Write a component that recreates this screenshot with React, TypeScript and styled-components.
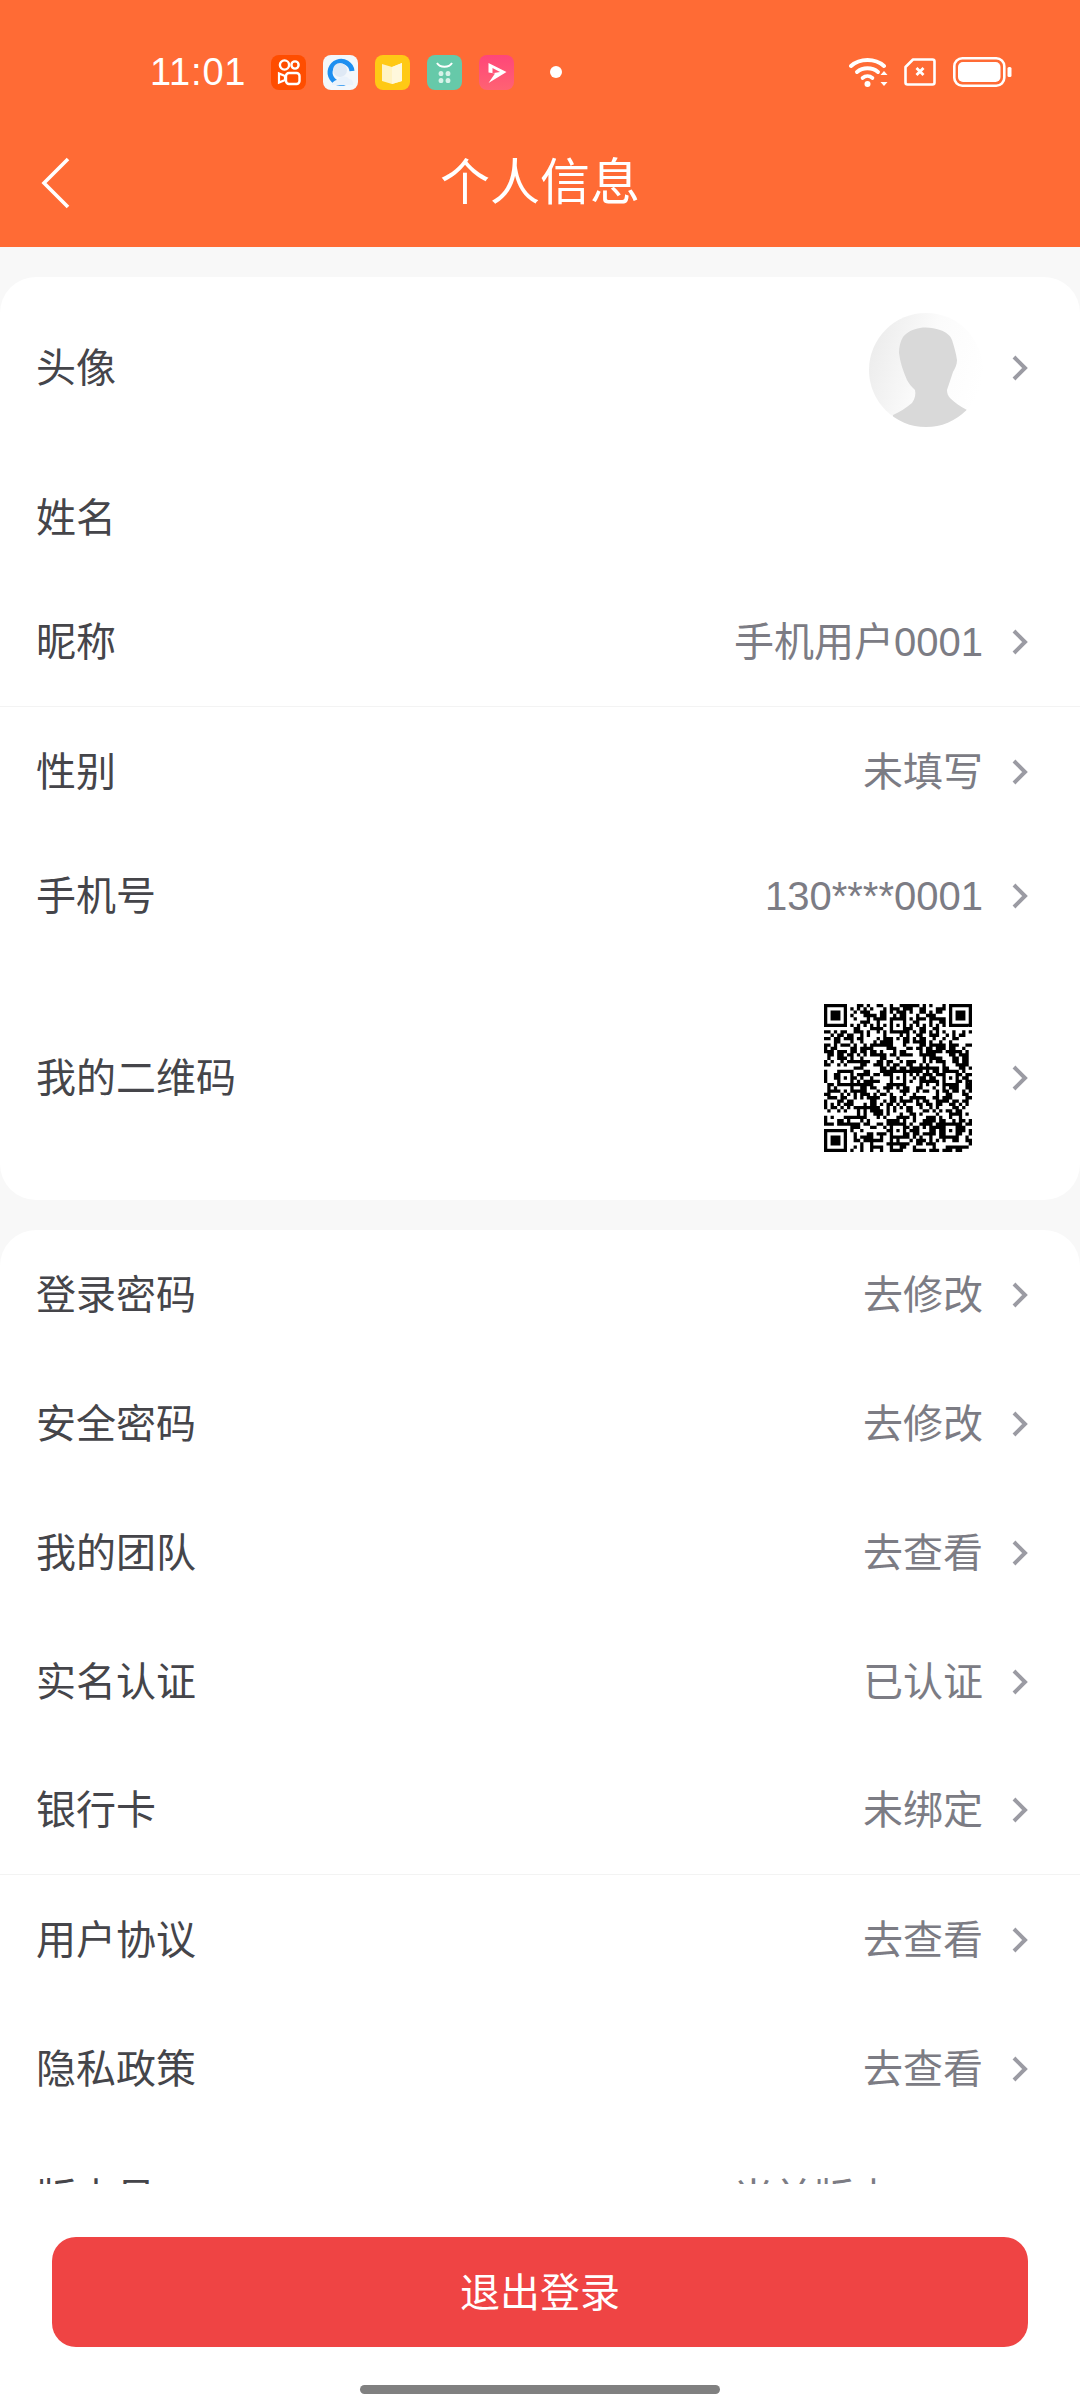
import React from "react";
import styled, { createGlobalStyle } from "styled-components";

const GlobalStyle = createGlobalStyle`
  html, body {
    margin: 0;
    padding: 0;
    background: #fff;
  }
  * {
    box-sizing: border-box;
  }
`;

const Page = styled.div`
  width: 1080px;
  height: 2400px;
  display: flex;
  flex-direction: column;
  overflow: hidden;
  font-family: "Liberation Sans", "Noto Sans CJK SC", sans-serif;
  background: #fff;
`;

const Header = styled.header`
  flex: none;
  height: 247px;
  background: #ff6b35;
  color: #fff;
  display: flex;
  flex-direction: column;
`;

const StatusBar = styled.div`
  height: 147px;
  display: flex;
  align-items: center;
  padding: 0 68px 3px 150px;
`;

const Clock = styled.span`
  font-size: 38px;
  line-height: 1;
  letter-spacing: 0.8px;
  width: 121px;
`;

const AppIcons = styled.div`
  display: flex;
  align-items: center;
  gap: 17px;
`;

const AppIcon = styled.svg`
  display: block;
  width: 35px;
  height: 35px;
`;

const Dot = styled.span`
  width: 12px;
  height: 12px;
  border-radius: 50%;
  background: #fff;
  margin-left: 19px;
`;

const SystemIcons = styled.div`
  margin-left: auto;
  display: flex;
  align-items: center;
  gap: 17px;
`;

const WifiIcon = styled.svg`
  display: block;
  margin-right: -3px;
`;

const NavBar = styled.div`
  height: 72px;
  display: grid;
  grid-template-columns: 1fr auto 1fr;
  align-items: center;
  padding: 0 40px;
`;

const Title = styled.h1`
  margin: 0;
  font-size: 50px;
  font-weight: 400;
  line-height: 72px;
`;

const Scroller = styled.main`
  flex: 1;
  min-height: 0;
  overflow: hidden;
  background: #f8f8f8;
  padding-top: 30px;
  display: flex;
  flex-direction: column;
  gap: 30px;
`;

const Card = styled.section`
  flex: none;
  background: #fff;
  border-radius: 36px;
`;

const Row = styled.div<{ $height: number; $divider?: boolean }>`
  height: ${(p) => p.$height}px;
  display: flex;
  align-items: center;
  padding: 0 52px 0 36px;
  border-bottom: ${(p) => (p.$divider ? "1px solid #f3f3f3" : "none")};
`;

const Label = styled.span`
  font-size: 40px;
  line-height: 1;
  color: #45454a;
`;

const Value = styled.span<{ $bare?: boolean }>`
  margin-left: auto;
  margin-right: ${(p) => (p.$bare ? "-19px" : "0")};
  font-size: 40px;
  line-height: 1;
  color: #7c7c84;
`;

const Trailing = styled.div`
  margin-left: auto;
  display: flex;
  align-items: center;
`;

const Chevron = styled.svg`
  flex: none;
  display: block;
  width: 16px;
  height: 26px;
  margin-left: 29px;
`;

const Avatar = styled.svg`
  display: block;
  width: 114px;
  height: 114px;
  margin-top: 4px;
`;

const QrCode = styled.svg`
  display: block;
  width: 148px;
  height: 148px;
  margin-right: 11px;
`;

const Footer = styled.footer`
  flex: none;
  height: 216px;
  background: #fff;
  padding: 53px 52px 0;
  display: flex;
  flex-direction: column;
  align-items: center;
`;

const LogoutButton = styled.button`
  width: 100%;
  height: 110px;
  border: none;
  border-radius: 24px;
  background: #ef4444;
  color: #fff;
  font-family: inherit;
  font-size: 40px;
  padding: 0 0 4px;
`;

const HomeBar = styled.div`
  width: 360px;
  height: 9px;
  border-radius: 5px;
  background: #808080;
  margin-top: 38px;
`;

const Arrow = () => (
  <Chevron viewBox="0 0 16 26">
    <path d="M2 2l11 11L2 24" fill="none" stroke="#9b9ba3" strokeWidth="4" />
  </Chevron>
);

// 45 modules (version 7): fixed patterns are real, the data part is only a stand-in
const QR_SIZE = 45;

const buildQr = () => {
  const cells: boolean[][] = Array.from({ length: QR_SIZE }, () => Array(QR_SIZE).fill(false));
  const fixed: boolean[][] = Array.from({ length: QR_SIZE }, () => Array(QR_SIZE).fill(false));
  const put = (x: number, y: number, on: boolean) => {
    if (x < 0 || y < 0 || x >= QR_SIZE || y >= QR_SIZE) return;
    cells[y][x] = on;
    fixed[y][x] = true;
  };
  const finder = (ox: number, oy: number) => {
    for (let y = -1; y <= 7; y++) {
      for (let x = -1; x <= 7; x++) {
        const ring = x >= 0 && x <= 6 && y >= 0 && y <= 6 && (x === 0 || x === 6 || y === 0 || y === 6);
        const core = x >= 2 && x <= 4 && y >= 2 && y <= 4;
        put(ox + x, oy + y, ring || core);
      }
    }
  };
  finder(0, 0);
  finder(QR_SIZE - 7, 0);
  finder(0, QR_SIZE - 7);
  for (let i = 8; i < QR_SIZE - 8; i++) {
    put(i, 6, i % 2 === 0);
    put(6, i, i % 2 === 0);
  }
  [6, 22, 38].forEach((cy) => {
    [6, 22, 38].forEach((cx) => {
      if ((cx === 6 && cy === 6) || (cx === 38 && cy === 6) || (cx === 6 && cy === 38)) return;
      for (let y = -2; y <= 2; y++) {
        for (let x = -2; x <= 2; x++) {
          put(cx + x, cy + y, Math.max(Math.abs(x), Math.abs(y)) !== 1);
        }
      }
    });
  });
  let seed = 20011;
  for (let y = 0; y < QR_SIZE; y++) {
    for (let x = 0; x < QR_SIZE; x++) {
      seed = (seed * 1103515245 + 12345) & 0x7fffffff;
      if (!fixed[y][x]) cells[y][x] = (seed >> 16) % 100 < 52;
    }
  }
  let d = "";
  cells.forEach((line, y) =>
    line.forEach((on, x) => {
      if (on) d += `M${x} ${y}h1v1h-1z`;
    })
  );
  return d;
};

const qrPath = buildQr();

type Item = { label: string; value: string; divider?: boolean };

const accountItems: Item[] = [
  { label: "登录密码", value: "去修改" },
  { label: "安全密码", value: "去修改" },
  { label: "我的团队", value: "去查看" },
  { label: "实名认证", value: "已认证" },
  { label: "银行卡", value: "未绑定", divider: true },
  { label: "用户协议", value: "去查看" },
  { label: "隐私政策", value: "去查看" },
];

export default function App() {
  return (
    <Page>
      <GlobalStyle />
      <Header>
        <StatusBar>
          <Clock>11:01</Clock>
          <AppIcons>
            <AppIcon viewBox="0 0 35 35">
              <rect width="35" height="35" rx="8" fill="#ff4d00" />
              <circle cx="13.5" cy="10" r="4.6" fill="none" stroke="#fff" strokeWidth="2.4" />
              <circle cx="24" cy="10" r="3.6" fill="none" stroke="#fff" strokeWidth="2.4" />
              <rect x="15" y="18" width="13.5" height="11" rx="3" fill="none" stroke="#fff" strokeWidth="2.4" />
              <path d="M14 21l-6-2.5v9l6-2.500z" fill="none" stroke="#fff" strokeWidth="2.2" />
            </AppIcon>
            <AppIcon viewBox="0 0 35 35">
              <rect width="35" height="35" rx="8" fill="#f3f7fb" />
              <path d="M26 25a11 11 0 1 1 3-9" fill="none" stroke="#1e8ff0" strokeWidth="5" />
              <circle cx="17" cy="15" r="7" fill="#dfe9f5" />
              <path d="M9 30c0-3 3-5 6-5 1-4 9-5 11-1 3 0 5 3 4 6z" fill="#eaf2fb" />
            </AppIcon>
            <AppIcon viewBox="0 0 35 35">
              <rect width="35" height="35" rx="8" fill="#ffc915" />
              <path d="M7 9l10 3 10-4v18l-10 3-10-3z" fill="#fff3c4" />
              <path d="M17 12l10-4v18l-10 3z" fill="#fff8dc" />
            </AppIcon>
            <AppIcon viewBox="0 0 35 35">
              <rect width="35" height="35" rx="8" fill="#66c9a9" />
              <path d="M10 8c3 5 12 5 15 0" fill="none" stroke="#fff" strokeWidth="2" />
              <ellipse cx="14" cy="18.500" rx="2.400" ry="2.600" fill="#d6f2e8" />
              <ellipse cx="21" cy="18.500" rx="2.400" ry="2.600" fill="#d6f2e8" />
              <ellipse cx="14" cy="25.500" rx="2.400" ry="2.600" fill="#d6f2e8" />
              <ellipse cx="21" cy="25.500" rx="2.400" ry="2.600" fill="#d6f2e8" />
            </AppIcon>
            <AppIcon viewBox="0 0 35 35">
              <defs>
                <linearGradient id="pinkIcon" x1="0" y1="0" x2="0" y2="1">
                  <stop offset="0" stopColor="#ff4679" />
                  <stop offset="1" stopColor="#ff6273" />
                </linearGradient>
              </defs>
              <rect width="35" height="35" rx="8" fill="url(#pinkIcon)" />
              <path d="M9.500 8l18 9-18 11 6.500-9.500-6.500-1z" fill="#fff" />
              <path d="M13.500 13l7.500 4-7.500 1.200z" fill="#ff5577" />
            </AppIcon>
            <Dot />
          </AppIcons>
          <SystemIcons>
            <WifiIcon width="41" height="30" viewBox="0 0 41 30">
              <path d="M2 9c9-8 24-8 33 0" fill="none" stroke="#fff" strokeWidth="4" strokeLinecap="round" />
              <path d="M8 15c6-5 15-5 21 0" fill="none" stroke="#fff" strokeWidth="4" strokeLinecap="round" />
              <path d="M13.500 21c3-2.500 7-2.500 10 0" fill="none" stroke="#fff" strokeWidth="3.600" strokeLinecap="round" />
              <circle cx="18.500" cy="27" r="3" fill="#fff" />
              <path d="M35 14l-3.500 4h7zM35 29l-3.500-4h7z" fill="#fff" />
            </WifiIcon>
            <svg width="32" height="28" viewBox="0 0 32 28">
              <path d="M9 1.500h19.500a2 2 0 0 1 2 2v21a2 2 0 0 1-2 2h-25a2 2 0 0 1-2-2V9z" fill="none" stroke="#fff" strokeWidth="2.600" strokeLinejoin="round" />
              <path d="M12.500 10l7 7M19.500 10l-7 7" stroke="#fff" strokeWidth="2.800" />
            </svg>
            <svg width="59" height="30" viewBox="0 0 59 30">
              <rect x="1.300" y="1.300" width="50" height="27.400" rx="8" fill="none" stroke="#fff" strokeWidth="2.600" />
              <rect x="5" y="5" width="42.500" height="20" rx="5" fill="#fff" />
              <rect x="54.500" y="10" width="4" height="10" rx="1.500" fill="#fff" />
            </svg>
          </SystemIcons>
        </StatusBar>
        <NavBar>
          <svg width="32" height="52" viewBox="0 0 32 52">
            <path d="M28 2L4 26l24 24" fill="none" stroke="#fff" strokeWidth="3.600" />
          </svg>
          <Title>个人信息</Title>
        </NavBar>
      </Header>

      <Scroller>
        <Card>
          <Row $height={182}>
            <Label>头像</Label>
            <Trailing>
              <Avatar viewBox="0 0 114 114">
                <defs>
                  <linearGradient id="avatarBg" x1="0" y1="0.3" x2="1" y2="0.6">
                    <stop offset="0" stopColor="#ececec" />
                    <stop offset="0.5" stopColor="#fbfbfb" />
                    <stop offset="1" stopColor="#fff" />
                  </linearGradient>
                  <clipPath id="avatarClip">
                    <circle cx="57" cy="57" r="57" />
                  </clipPath>
                </defs>
                <circle cx="57" cy="57" r="57" fill="url(#avatarBg)" />
                <path
                  clipPath="url(#avatarClip)"
                  d="M51 15C58 14 65 15 71 17C77 19 81 22 83 27C85 33 87 40 88 47C88 52 86 55 84 59C82 65 80 71 78 77C78 80 79 83 81 85C86 90 92 94 98 97L98 114L24 114L24 102C31 99 37 95 43 90C46 86 47 81 46 77C43 74 40 71 38 67C34 58 31 49 30 40C30 34 31 29 34 24C38 19 44 16 51 15z"
                  fill="#d9d9d9"
                />
              </Avatar>
              <Arrow />
            </Trailing>
          </Row>
          <Row $height={118}>
            <Label>姓名</Label>
          </Row>
          <Row $height={130} $divider>
            <Label>昵称</Label>
            <Value>手机用户0001</Value>
            <Arrow />
          </Row>
          <Row $height={130}>
            <Label>性别</Label>
            <Value>未填写</Value>
            <Arrow />
          </Row>
          <Row $height={118}>
            <Label>手机号</Label>
            <Value>130****0001</Value>
            <Arrow />
          </Row>
          <Row $height={245}>
            <Label>我的二维码</Label>
            <Trailing>
              <QrCode viewBox="0 0 45 45">
                <path d={qrPath} fill="#000" />
              </QrCode>
              <Arrow />
            </Trailing>
          </Row>
        </Card>

        <Card>
          {accountItems.map((item) => (
            <Row key={item.label} $height={129} $divider={item.divider}>
              <Label>{item.label}</Label>
              <Value>{item.value}</Value>
              <Arrow />
            </Row>
          ))}
          <Row $height={129}>
            <Label>版本号</Label>
            <Value $bare>当前版本: v1.0.12</Value>
          </Row>
        </Card>
      </Scroller>

      <Footer>
        <LogoutButton>退出登录</LogoutButton>
        <HomeBar />
      </Footer>
    </Page>
  );
}
